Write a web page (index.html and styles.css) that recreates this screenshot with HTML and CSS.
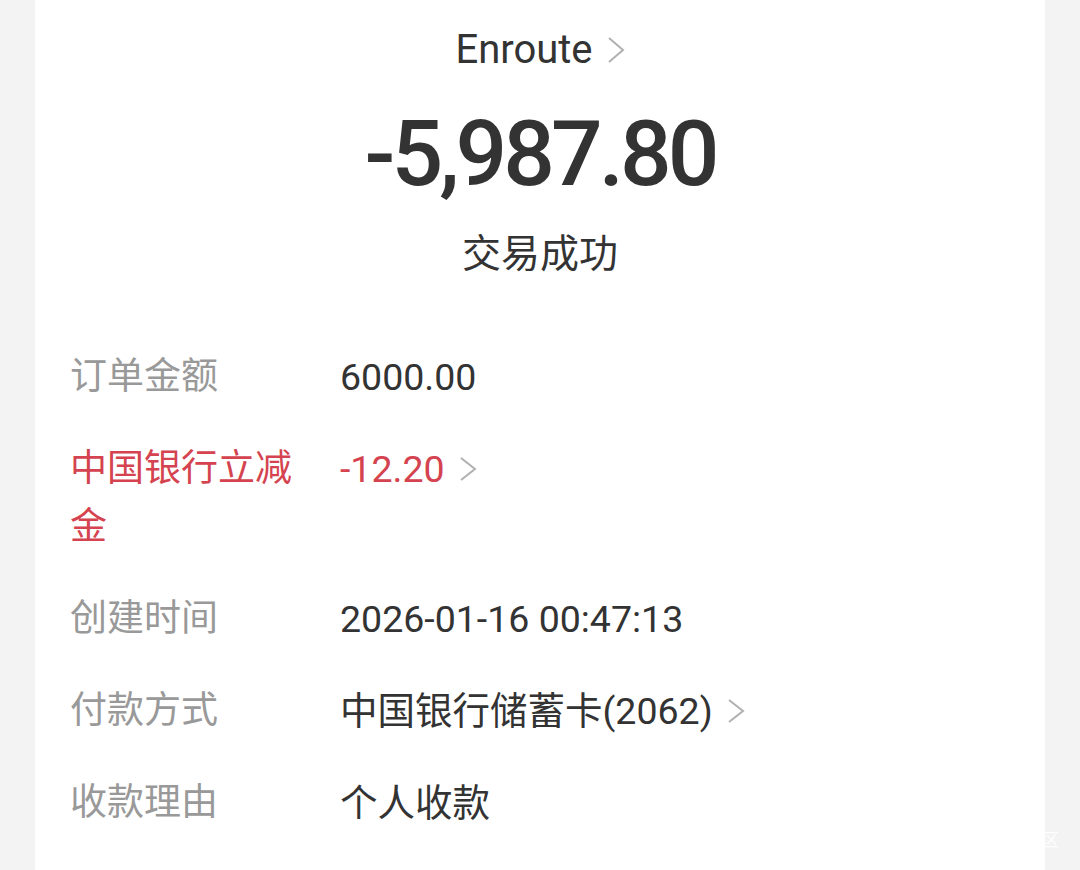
FILE: index.html
```html
<!DOCTYPE html>
<html>
<head>
  <title>交易详情</title>
  <link rel="stylesheet" href="styles.css">
</head>
<body>
  <div class="card">
    <div class="header">
      <div class="merchant">Enroute
        <svg class="chevron" width="18" height="28" viewBox="0 0 18 28"><polyline points="2,2 16,14 2,26"/></svg>
      </div>
      <div class="amount">-5,987.80</div>
      <div class="status">交易成功</div>
    </div>

    <div class="details">
      <div class="row">
        <div class="label">订单金额</div>
        <div class="value">6000.00</div>
      </div>
      <div class="row red">
        <div class="label">中国银行立减金</div>
        <div class="value">-12.20
          <svg class="chevron" width="18" height="26" viewBox="0 0 18 26"><polyline points="2,2 16,13 2,24"/></svg>
        </div>
      </div>
      <div class="row">
        <div class="label">创建时间</div>
        <div class="value">2026-01-16 00:47:13</div>
      </div>
      <div class="row">
        <div class="label">付款方式</div>
        <div class="value">中国银行储蓄卡(2062)
          <svg class="chevron" width="18" height="26" viewBox="0 0 18 26"><polyline points="2,2 16,13 2,24"/></svg>
        </div>
      </div>
      <div class="row">
        <div class="label">收款理由</div>
        <div class="value">个人收款</div>
      </div>
    </div>
  </div>
  <div class="watermark">区</div>
</body>
</html>
```

FILE: styles.css
```css
body {
  margin: 0;
  padding: 0;
  background-color: #f3f3f3;
  font-family: Roboto, "Noto Sans CJK SC", sans-serif;
  color: #333;
}

.card {
  margin: 0 35px;
  min-height: 100vh;
  background-color: #fff;
}

.header {
  padding-top: 25px;
  text-align: center;
}

.merchant {
  display: flex;
  justify-content: center;
  align-items: center;
  gap: 14px;
  font-size: 40px;
  line-height: 50px;
}

.chevron {
  flex-shrink: 0;
}

.chevron polyline {
  fill: none;
  stroke: #b0b0b0;
  stroke-width: 2;
}

.amount {
  margin-top: 29px;
  font-size: 91px;
  font-weight: 500;
  line-height: 100px;
  letter-spacing: -4px;
}

.status {
  margin-top: 25px;
  font-size: 39px;
  line-height: 50px;
}

.details {
  padding: 52px 35px 0;
}

.row {
  display: flex;
  padding: 17px 0;
  font-size: 37.5px;
  line-height: 58px;
}

.label {
  width: 240px;
  margin-right: 30px;
  font-size: 37px;
  color: #999;
}

.value {
  display: flex;
  align-items: center;
  align-self: flex-start;
  gap: 14px;
  height: 58px;
}

.row.red .label,
.row.red .value {
  color: #d4434f;
}

.watermark {
  position: absolute;
  left: 1042px;
  top: 826px;
  font-family: "Noto Sans CJK SC", sans-serif;
  font-size: 17px;
  color: rgba(255, 255, 255, 0.9);
}
```
